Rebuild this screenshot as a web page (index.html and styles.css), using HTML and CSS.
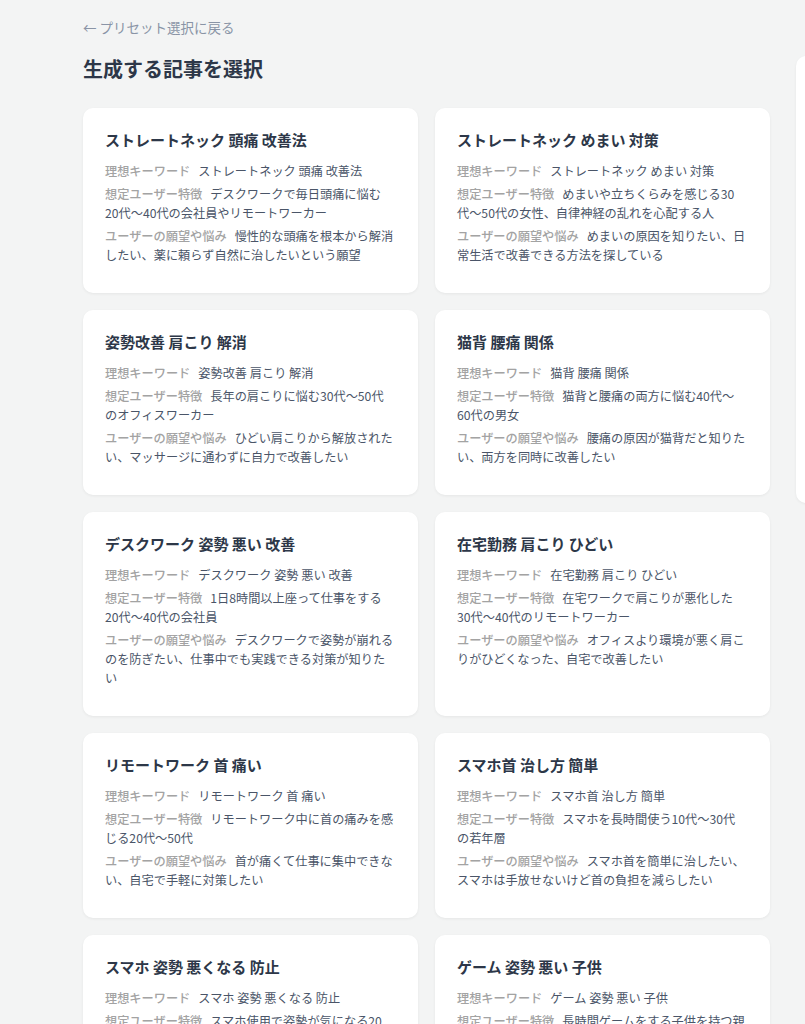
FILE: index.html
```html
<!DOCTYPE html>
<html lang="ja">
<head>
    <meta charset="UTF-8">
    <meta name="viewport" content="width=device-width, initial-scale=1.0">
    <title>生成する記事を選択</title>
    <link rel="stylesheet" href="styles.css">
</head>
<body>

<div class="layout">
    <div class="main-content">
        <a class="back-link" href="#">← プリセット選択に戻る</a>
        <h1>生成する記事を選択</h1>

        <div class="article-grid">
            <div class="article-card">
                <h2>ストレートネック 頭痛 改善法</h2>
                <p><span class="label">理想キーワード</span>ストレートネック 頭痛 改善法</p>
                <p><span class="label">想定ユーザー特徴</span>デスクワークで毎日頭痛に悩む20代〜40代の会社員やリモートワーカー</p>
                <p><span class="label">ユーザーの願望や悩み</span>慢性的な頭痛を根本から解消したい、薬に頼らず自然に治したいという願望</p>
            </div>
            <div class="article-card">
                <h2>ストレートネック めまい 対策</h2>
                <p><span class="label">理想キーワード</span>ストレートネック めまい 対策</p>
                <p><span class="label">想定ユーザー特徴</span>めまいや立ちくらみを感じる30代〜50代の女性、自律神経の乱れを心配する人</p>
                <p><span class="label">ユーザーの願望や悩み</span>めまいの原因を知りたい、日常生活で改善できる方法を探している</p>
            </div>
            <div class="article-card">
                <h2>姿勢改善 肩こり 解消</h2>
                <p><span class="label">理想キーワード</span>姿勢改善 肩こり 解消</p>
                <p><span class="label">想定ユーザー特徴</span>長年の肩こりに悩む30代〜50代のオフィスワーカー</p>
                <p><span class="label">ユーザーの願望や悩み</span>ひどい肩こりから解放されたい、マッサージに通わずに自力で改善したい</p>
            </div>
            <div class="article-card">
                <h2>猫背 腰痛 関係</h2>
                <p><span class="label">理想キーワード</span>猫背 腰痛 関係</p>
                <p><span class="label">想定ユーザー特徴</span>猫背と腰痛の両方に悩む40代〜60代の男女</p>
                <p><span class="label">ユーザーの願望や悩み</span>腰痛の原因が猫背だと知りたい、両方を同時に改善したい</p>
            </div>
            <div class="article-card">
                <h2>デスクワーク 姿勢 悪い 改善</h2>
                <p><span class="label">理想キーワード</span>デスクワーク 姿勢 悪い 改善</p>
                <p><span class="label">想定ユーザー特徴</span>1日8時間以上座って仕事をする20代〜40代の会社員</p>
                <p><span class="label">ユーザーの願望や悩み</span>デスクワークで姿勢が崩れるのを防ぎたい、仕事中でも実践できる対策が知りたい</p>
            </div>
            <div class="article-card">
                <h2>在宅勤務 肩こり ひどい</h2>
                <p><span class="label">理想キーワード</span>在宅勤務 肩こり ひどい</p>
                <p><span class="label">想定ユーザー特徴</span>在宅ワークで肩こりが悪化した30代〜40代のリモートワーカー</p>
                <p><span class="label">ユーザーの願望や悩み</span>オフィスより環境が悪く肩こりがひどくなった、自宅で改善したい</p>
            </div>
            <div class="article-card">
                <h2>リモートワーク 首 痛い</h2>
                <p><span class="label">理想キーワード</span>リモートワーク 首 痛い</p>
                <p><span class="label">想定ユーザー特徴</span>リモートワーク中に首の痛みを感じる20代〜50代</p>
                <p><span class="label">ユーザーの願望や悩み</span>首が痛くて仕事に集中できない、自宅で手軽に対策したい</p>
            </div>
            <div class="article-card">
                <h2>スマホ首 治し方 簡単</h2>
                <p><span class="label">理想キーワード</span>スマホ首 治し方 簡単</p>
                <p><span class="label">想定ユーザー特徴</span>スマホを長時間使う10代〜30代の若年層</p>
                <p><span class="label">ユーザーの願望や悩み</span>スマホ首を簡単に治したい、スマホは手放せないけど首の負担を減らしたい</p>
            </div>
            <div class="article-card">
                <h2>スマホ 姿勢 悪くなる 防止</h2>
                <p><span class="label">理想キーワード</span>スマホ 姿勢 悪くなる 防止</p>
                <p><span class="label">想定ユーザー特徴</span>スマホ使用で姿勢が気になる20代〜40代</p>
                <p><span class="label">ユーザーの願望や悩み</span>スマホを使いながらも姿勢を保ちたい</p>
            </div>
            <div class="article-card">
                <h2>ゲーム 姿勢 悪い 子供</h2>
                <p><span class="label">理想キーワード</span>ゲーム 姿勢 悪い 子供</p>
                <p><span class="label">想定ユーザー特徴</span>長時間ゲームをする子供を持つ親</p>
                <p><span class="label">ユーザーの願望や悩み</span>子供の姿勢の悪さを改善したい</p>
            </div>
        </div>
    </div>

    <aside class="side-panel"></aside>
</div>

</body>
</html>
```

FILE: styles.css
```css
html, body {
    overflow-x: hidden;
}

body {
    font-family: "Noto Sans CJK JP", "Noto Sans", sans-serif;
    background-color: #f3f4f4;
    color: #4a5568;
    margin: 0;
    padding: 0;
}

.layout {
    display: flex;
    gap: 26px;
    padding: 14px 0 40px 83px;
    width: 1200px;
}

.main-content {
    flex: 0 0 687px;
}

.back-link {
    display: inline-block;
    font-size: 13.5px;
    line-height: 19px;
    color: #8a94a6;
    text-decoration: none;
}

h1 {
    font-size: 20px;
    line-height: 28px;
    color: #2d3748;
    margin: 17px 0 25px;
}

.article-grid {
    display: grid;
    grid-template-columns: 335px 335px;
    gap: 17px;
}

.article-card {
    background-color: #fff;
    border-radius: 10px;
    box-shadow: 0 1px 3px rgba(0, 0, 0, 0.06);
    padding: 21px 24px 24px 22px;
}

.article-card h2 {
    font-size: 15px;
    line-height: 22px;
    color: #2d3748;
    margin: 0 0 11px;
}

.article-card p {
    font-size: 12.2px;
    line-height: 19px;
    margin: 0 0 4px;
}

.article-card .label {
    color: #a3a3a3;
    font-weight: 500;
    margin-right: 8px;
}

.side-panel {
    flex: 0 0 300px;
    align-self: flex-start;
    height: 447px;
    margin-top: 42px;
    background-color: #fff;
    border-radius: 10px;
    box-shadow: 0 1px 3px rgba(0, 0, 0, 0.06);
}
```
